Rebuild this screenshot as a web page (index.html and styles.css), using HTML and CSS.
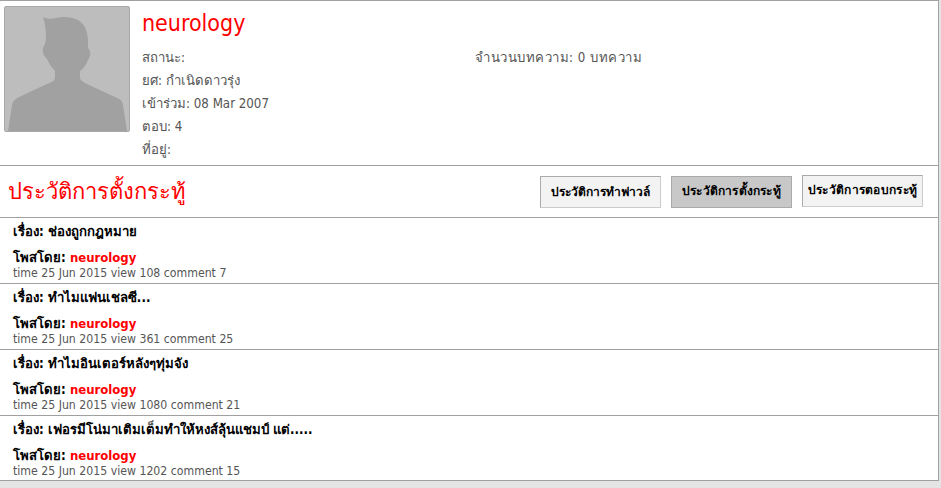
FILE: index.html
```html
<!DOCTYPE html>
<html>
<head>
	<meta charset="utf-8">
	<title>neurology</title>
	<link rel="stylesheet" href="styles.css">
</head>
<body>
	<div class="wrapper">
		<div class="profile">
			<div class="avatar">
				<svg viewBox="0 0 124 124" width="124" height="124">
					<path fill="#a1a1a1" d="M38 10C42 12 46 12 51 11C59 9 67 10 73 13C80 17 83 25 83 35V41C86 44 86 49 83 53C81 58 79 61 75 64V71C75 73 78 75 82 77L110 90C115 92 117 93 118 98L122 124H3L7 98C8 94 10 92 14 90L42 77C47 75 50 74 50 70V64C46 60 44 56 42 52C39 49 37 45 38 41C40 37 41 35 41 30C41 23 40 16 38 10Z"/>
				</svg>
			</div>
			<div class="info">
				<h2 class="username">neurology</h2>
				<div class="details">
					<div class="details-left">
						<p>สถานะ:</p>
						<p>ยศ: กำเนิดดาวรุ่ง</p>
						<p>เข้าร่วม: 08 Mar 2007</p>
						<p>ตอบ: 4</p>
						<p>ที่อยู่:</p>
					</div>
					<div class="details-right">
						<p>จำนวนบทความ: 0 บทความ</p>
					</div>
				</div>
			</div>
		</div>
		<div class="history-head">
			<h1>ประวัติการตั้งกระทู้</h1>
			<div class="tabs">
				<a class="tab">ประวัติการทำฟาวล์</a>
				<a class="tab active">ประวัติการตั้งกระทู้</a>
				<a class="tab raised">ประวัติการตอบกระทู้</a>
			</div>
		</div>
		<div class="post">
			<div class="post-title">เรื่อง: ช่องถูกกฎหมาย</div>
			<div class="post-by">โพสโดย: <span>neurology</span></div>
			<div class="post-meta">time 25 Jun 2015 view 108 comment 7</div>
		</div>
		<div class="post">
			<div class="post-title">เรื่อง: ทำไมแฟนเชลซี...</div>
			<div class="post-by">โพสโดย: <span>neurology</span></div>
			<div class="post-meta">time 25 Jun 2015 view 361 comment 25</div>
		</div>
		<div class="post">
			<div class="post-title">เรื่อง: ทำไมอินเตอร์หลังๆทุ่มจัง</div>
			<div class="post-by">โพสโดย: <span>neurology</span></div>
			<div class="post-meta">time 25 Jun 2015 view 1080 comment 21</div>
		</div>
		<div class="post">
			<div class="post-title">เรื่อง: เฟอรมีโน่มาเติมเต็มทำให้หงส์ลุ้นแชมป์ แต่.....</div>
			<div class="post-by">โพสโดย: <span>neurology</span></div>
			<div class="post-meta">time 25 Jun 2015 view 1202 comment 15</div>
		</div>
	</div>
</body>
</html>
```
FILE: styles.css
```css
html, body {
	margin: 0;
	padding: 0;
	background-color: #e4e4e4;
}
body {
	font-family: "DejaVu Sans Condensed", "DejaVu Sans", "Noto Sans", "Noto Sans CJK SC", sans-serif;
	height: 488px;
	overflow: hidden;
}
.wrapper {
	width: 938px;
	height: 479px;
	overflow: hidden;
	background-color: #fff;
	border-top: solid 1px #a0a0a0;
	border-right: solid 1px #a0a0a0;
	border-bottom: solid 1px #a0a0a0;
}
.profile {
	display: flex;
	height: 164px;
	padding-left: 4px;
	padding-top: 5px;
	box-sizing: border-box;
}
.avatar {
	width: 126px;
	height: 126px;
	box-sizing: border-box;
	background-color: #bdbdbd;
	border: solid 1px #a8a8a8;
	border-radius: 2px;
}
.avatar svg {
	display: block;
}
.info {
	flex: 1;
	margin-left: 12px;
}
.username {
	margin: 0;
	font-weight: normal;
	font-size: 23px;
	line-height: 34px;
	color: #f00;
}
.details {
	display: flex;
	margin-top: 6px;
}
.details-left {
	width: 333px;
}
.details p {
	margin: 0;
	font-size: 13.2px;
	line-height: 23px;
	color: #555;
}
.details-right p {
	letter-spacing: 0.5px;
}
.history-head {
	display: flex;
	justify-content: space-between;
	align-items: center;
	height: 52px;
	box-sizing: border-box;
	border-top: solid 1px #a0a0a0;
	padding: 0 15px 0 8px;
}
.history-head h1 {
	margin: 0;
	font-weight: normal;
	font-size: 22px;
	color: #f00;
}
.tabs {
	display: flex;
	gap: 10px;
}
.tab {
	display: block;
	height: 32px;
	width: 121px;
	box-sizing: border-box;
	font-size: 12px;
	font-weight: bold;
	line-height: 30px;
	text-align: center;
	color: #000;
	background-color: #f3f3f3;
	border: solid 1px #aaa;
	border-right-color: #ccc;
	border-bottom-color: #ccc;
	white-space: nowrap;
}
.tab.active {
	background-color: #c8c8c8;
	border-color: #aaa;
	line-height: 28px;
	letter-spacing: 0.2px;
}
.tab.raised {
	margin-top: -1px;
	line-height: 28px;
	letter-spacing: 0.3px;
}
.post {
	height: 66px;
	box-sizing: border-box;
	border-top: solid 1px #a0a0a0;
	padding: 5px 0 0 13px;
}
.post-title, .post-by {
	font-size: 13.2px;
	font-weight: bold;
	color: #000;
	line-height: 18px;
}
.post-by {
	margin-top: 8px;
}
.post-by span {
	color: #f00;
	font-size: 13px;
}
.post-meta {
	font-size: 12.2px;
	line-height: 12px;
	color: #555;
}
```
